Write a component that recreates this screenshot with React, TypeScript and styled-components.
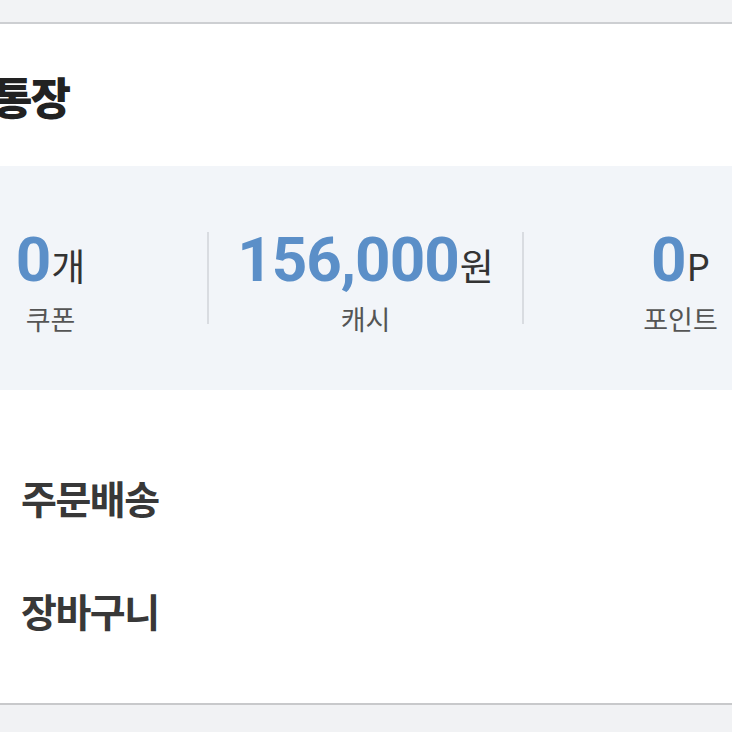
import React from "react";
import styled, { createGlobalStyle } from "styled-components";

const GlobalStyle = createGlobalStyle`
  html, body {
    margin: 0;
    padding: 0;
    background: #f1f2f4;
    overflow: hidden;
  }
  * {
    box-sizing: border-box;
  }
  body {
    font-family: Roboto, "Noto Sans CJK KR", sans-serif;
  }
`;

const Page = styled.div`
  width: 732px;
  height: 732px;
  overflow: hidden;
  background: #f1f2f4;
`;

const TopGap = styled.div`
  height: 22px;
  background: #f2f3f5;
`;

const Card = styled.section`
  background: #ffffff;
  border-top: 2px solid #cdcfd2;
  border-bottom: 2px solid #c8c9cb;
`;

const TitleRow = styled.div`
  height: 142px;
  display: flex;
  align-items: center;
  padding-top: 2px;
`;

const Title = styled.h2`
  margin: 0 0 0 -8px;
  font-family: "Noto Sans CJK KR", sans-serif;
  font-size: 44px;
  font-weight: 900;
  color: #222222;
  letter-spacing: -2px;
`;

const StatsBand = styled.div`
  height: 224px;
  background: #f2f5f9;
  display: flex;
  align-items: center;
  overflow: hidden;
`;

const StatsRow = styled.div`
  display: grid;
  grid-template-columns: repeat(3, 315px);
  margin-left: -108px;
  flex-shrink: 0;
`;

const Stat = styled.div<{ $divider?: boolean }>`
  height: 92px;
  display: flex;
  flex-direction: column;
  align-items: center;
  justify-content: space-between;
  border-left: ${(p) => (p.$divider ? "2px solid #d9dce1" : "2px solid transparent")};
`;

const Value = styled.div`
  display: flex;
  align-items: baseline;
  line-height: 1;
  margin-top: -3px;
`;

const Number = styled.span`
  font-family: Roboto, sans-serif;
  font-size: 62px;
  font-weight: 700;
  color: #5b8fc8;
  letter-spacing: -1px;
`;

const Unit = styled.span`
  font-family: "Noto Sans CJK KR", Roboto, sans-serif;
  font-size: 37px;
  font-weight: 400;
  color: #333333;
  margin-left: 1px;
`;

const Label = styled.div`
  font-family: "Noto Sans CJK KR", sans-serif;
  font-size: 27px;
  line-height: 1;
  color: #555555;
  margin-bottom: -8px;
`;

const Menu = styled.nav`
  padding: 50px 0 37px 21px;
`;

const MenuItem = styled.div`
  height: 113px;
  display: flex;
  align-items: center;
  font-family: "Noto Sans CJK KR", sans-serif;
  font-size: 39px;
  font-weight: 700;
  color: #383838;
  letter-spacing: -1.5px;
`;

const stats = [
  { value: "0", unit: "개", label: "쿠폰" },
  { value: "156,000", unit: "원", label: "캐시" },
  { value: "0", unit: "P", label: "포인트" },
];

const App = () => {
  return (
    <Page>
      <GlobalStyle />
      <TopGap />
      <Card>
        <TitleRow>
          <Title>통장</Title>
        </TitleRow>
        <StatsBand>
          <StatsRow>
            {stats.map((s, i) => (
              <Stat key={s.label} $divider={i > 0}>
                <Value>
                  <Number>{s.value}</Number>
                  <Unit>{s.unit}</Unit>
                </Value>
                <Label>{s.label}</Label>
              </Stat>
            ))}
          </StatsRow>
        </StatsBand>
        <Menu>
          <MenuItem>주문배송</MenuItem>
          <MenuItem>장바구니</MenuItem>
        </Menu>
      </Card>
    </Page>
  );
};

export default App;
